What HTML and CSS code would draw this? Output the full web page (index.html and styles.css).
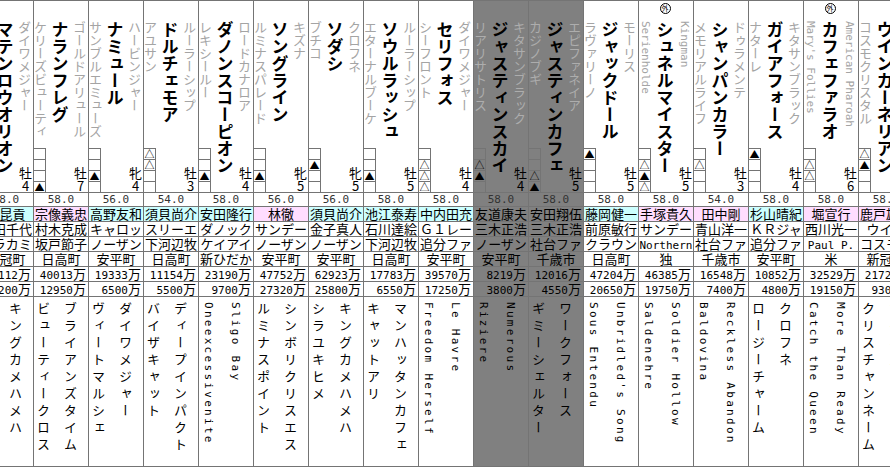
FILE: index.html
```html
<!DOCTYPE html>
<html lang="ja">
<head>
<meta charset="utf-8">
<title>出馬表</title>
<link rel="stylesheet" href="styles.css">
</head>
<body>
<div class="sheet">

<div class="col">
  <div class="top">
    <span class="v dam">パルテノン</span>
    <span class="v name">マテンロウオリオン</span>
    <span class="v sire">ダイワメジャー</span>
    <div class="marks"><i></i><i></i><i></i><i></i></div>
    <div class="sex">牡<br>4</div>
  </div>
  <div class="cell w">58.0</div>
  <div class="cell cy">　昆貢</div>
  <div class="cell">寺田千代</div>
  <div class="cell">ムラカミ</div>
  <div class="cell">新冠町</div>
  <div class="cell num"><span class="d">27112</span>万</div>
  <div class="cell num"><span class="d">9200</span>万</div>
  <div class="low"><span>パルテノン</span><span>キングカメハメハ</span></div>
</div>

<div class="col">
  <div class="top">
    <span class="v dam">ケリーズビューティ</span>
    <span class="v name">ナランフレグ</span>
    <span class="v sire">ゴールドアリュール</span>
    <div class="marks"><i></i><i></i><i></i><i>▲</i></div>
    <div class="sex">牡<br>7</div>
  </div>
  <div class="cell w">58.0</div>
  <div class="cell pk">宗像義忠</div>
  <div class="cell">村木克成</div>
  <div class="cell">坂戸節子</div>
  <div class="cell">日高町</div>
  <div class="cell num"><span class="d">40013</span>万</div>
  <div class="cell num"><span class="d">12950</span>万</div>
  <div class="low"><span>ビューティークロス</span><span>ブライアンズタイム</span></div>
</div>

<div class="col">
  <div class="top">
    <span class="v dam">サンブルエミューズ</span>
    <span class="v name">ナミュール</span>
    <span class="v sire">ハービンジャー</span>
    <div class="marks"><i></i><i></i><i>▲</i><i></i></div>
    <div class="sex">牝<br>4</div>
  </div>
  <div class="cell w">56.0</div>
  <div class="cell cy">高野友和</div>
  <div class="cell">キャロッ</div>
  <div class="cell">ノーザン</div>
  <div class="cell">安平町</div>
  <div class="cell num"><span class="d">19333</span>万</div>
  <div class="cell num"><span class="d">6500</span>万</div>
  <div class="low"><span>ヴィートマルシェ</span><span>ダイワメジャー</span></div>
</div>

<div class="col">
  <div class="top">
    <span class="v dam">アユサン</span>
    <span class="v name">ドルチェモア</span>
    <span class="v sire">ルーラーシップ</span>
    <div class="marks"><i>△</i><i>△</i><i></i><i></i></div>
    <div class="sex">牡<br>3</div>
  </div>
  <div class="cell w">54.0</div>
  <div class="cell cy">須貝尚介</div>
  <div class="cell">スリーエ</div>
  <div class="cell">下河辺牧</div>
  <div class="cell">日高町</div>
  <div class="cell num"><span class="d">11154</span>万</div>
  <div class="cell num"><span class="d">5500</span>万</div>
  <div class="low"><span>バイザキャット</span><span>ディープインパクト</span></div>
</div>

<div class="col">
  <div class="top">
    <span class="v dam">レキシールー</span>
    <span class="v name">ダノンスコーピオン</span>
    <span class="v sire">ロードカナロア</span>
    <div class="marks"><i></i><i></i><i>▲</i><i></i></div>
    <div class="sex">牡<br>4</div>
  </div>
  <div class="cell w">58.0</div>
  <div class="cell cy">安田隆行</div>
  <div class="cell">ダノック</div>
  <div class="cell">ケイアイ</div>
  <div class="cell">新ひだか</div>
  <div class="cell num"><span class="d">23190</span>万</div>
  <div class="cell num"><span class="d">9700</span>万</div>
  <div class="low"><span class="lat">Oneexcessivenite</span><span class="lat">Sligo Bay</span></div>
</div>

<div class="col">
  <div class="top">
    <span class="v dam">ルミナスパレード</span>
    <span class="v name">ソングライン</span>
    <span class="v sire">キズナ</span>
    <div class="marks"><i></i><i></i><i>▲</i><i></i></div>
    <div class="sex">牝<br>5</div>
  </div>
  <div class="cell w">56.0</div>
  <div class="cell pk">林徹</div>
  <div class="cell">サンデー</div>
  <div class="cell">ノーザン</div>
  <div class="cell">安平町</div>
  <div class="cell num"><span class="d">47752</span>万</div>
  <div class="cell num"><span class="d">27320</span>万</div>
  <div class="low"><span>ルミナスポイント</span><span>シンボリクリスエス</span></div>
</div>

<div class="col">
  <div class="top">
    <span class="v dam">ブチコ</span>
    <span class="v name">ソダシ</span>
    <span class="v sire">クロフネ</span>
    <div class="marks"><i></i><i>▲</i><i></i><i></i></div>
    <div class="sex">牝<br>5</div>
  </div>
  <div class="cell w">56.0</div>
  <div class="cell cy">須貝尚介</div>
  <div class="cell">金子真人</div>
  <div class="cell">ノーザン</div>
  <div class="cell">安平町</div>
  <div class="cell num"><span class="d">62923</span>万</div>
  <div class="cell num"><span class="d">25800</span>万</div>
  <div class="low"><span>シラユキヒメ</span><span>キングカメハメハ</span></div>
</div>

<div class="col">
  <div class="top">
    <span class="v dam">エターナルブーケ</span>
    <span class="v name">ソウルラッシュ</span>
    <span class="v sire">ルーラーシップ</span>
    <div class="marks"><i></i><i></i><i>▲</i><i></i></div>
    <div class="sex">牡<br>5</div>
  </div>
  <div class="cell w">58.0</div>
  <div class="cell cy">池江泰寿</div>
  <div class="cell">石川達絵</div>
  <div class="cell">下河辺牧</div>
  <div class="cell">日高町</div>
  <div class="cell num"><span class="d">17783</span>万</div>
  <div class="cell num"><span class="d">6550</span>万</div>
  <div class="low"><span>キャットアリ</span><span>マンハッタンカフェ</span></div>
</div>

<div class="col">
  <div class="top">
    <span class="v dam">シーフロント</span>
    <span class="v name">セリフォス</span>
    <span class="v sire">ダイワメジャー</span>
    <div class="marks"><i></i><i>△</i><i>△</i><i>△</i></div>
    <div class="sex">牡<br>4</div>
  </div>
  <div class="cell w">58.0</div>
  <div class="cell cy">中内田充</div>
  <div class="cell">Ｇ１レー</div>
  <div class="cell">追分ファ</div>
  <div class="cell">安平町</div>
  <div class="cell num"><span class="d">39570</span>万</div>
  <div class="cell num"><span class="d">17250</span>万</div>
  <div class="low"><span class="lat">Freedom Herself</span><span class="lat">Le Havre</span></div>
</div>

<div class="col g">
  <div class="top">
    <span class="v dam">リアリサトリス</span>
    <span class="v name">ジャスティンスカイ</span>
    <span class="v sire">キタサンブラック</span>
    <div class="marks"><i></i><i>△</i><i>▲</i><i></i></div>
    <div class="sex">牡<br>4</div>
  </div>
  <div class="cell w">58.0</div>
  <div class="cell">友道康夫</div>
  <div class="cell">三木正浩</div>
  <div class="cell">ノーザン</div>
  <div class="cell">安平町</div>
  <div class="cell num"><span class="d">8219</span>万</div>
  <div class="cell num"><span class="d">3800</span>万</div>
  <div class="low"><span class="lat">Riziere</span><span class="lat">Numerous</span></div>
</div>

<div class="col g">
  <div class="top">
    <span class="v dam">カジノブギ</span>
    <span class="v name">ジャスティンカフェ</span>
    <span class="v sire">エピファネイア</span>
    <div class="marks"><i></i><i></i><i>△</i><i>▲</i></div>
    <div class="sex">牡<br>5</div>
  </div>
  <div class="cell w">58.0</div>
  <div class="cell">安田翔伍</div>
  <div class="cell">三木正浩</div>
  <div class="cell">社台ファ</div>
  <div class="cell">千歳市</div>
  <div class="cell num"><span class="d">12016</span>万</div>
  <div class="cell num"><span class="d">4550</span>万</div>
  <div class="low"><span>ギミーシェルター</span><span>ワークフォース</span></div>
</div>

<div class="col">
  <div class="top">
    <span class="v dam">ラヴァリーノ</span>
    <span class="v name">ジャックドール</span>
    <span class="v sire">モーリス</span>
    <div class="marks"><i>▲</i><i></i><i></i><i></i></div>
    <div class="sex">牡<br>5</div>
  </div>
  <div class="cell w">58.0</div>
  <div class="cell cy">藤岡健一</div>
  <div class="cell">前原敏行</div>
  <div class="cell">クラウン</div>
  <div class="cell">日高町</div>
  <div class="cell num"><span class="d">47204</span>万</div>
  <div class="cell num"><span class="d">20650</span>万</div>
  <div class="low"><span class="lat">Sous Entendu</span><span class="lat">Unbridled's Song</span></div>
</div>

<div class="col">
  <div class="top">
    <span class="gai">外</span>
    <span class="v dam lat">Serienholde</span>
    <span class="v name">シュネルマイスター</span>
    <span class="v sire lat">Kingman</span>
    <div class="marks"><i></i><i>△</i><i>▲</i><i>△</i></div>
    <div class="sex">牡<br>5</div>
  </div>
  <div class="cell w">58.0</div>
  <div class="cell pk">手塚貴久</div>
  <div class="cell">サンデー</div>
  <div class="cell"><span class="d">Northern</span></div>
  <div class="cell">独</div>
  <div class="cell num"><span class="d">46385</span>万</div>
  <div class="cell num"><span class="d">19750</span>万</div>
  <div class="low"><span class="lat">Saldenehre</span><span class="lat">Soldier Hollow</span></div>
</div>

<div class="col">
  <div class="top">
    <span class="v dam">メモリアルライフ</span>
    <span class="v name">シャンパンカラー</span>
    <span class="v sire">ドゥラメンテ</span>
    <div class="marks"><i></i><i>△</i><i></i><i></i></div>
    <div class="sex">牡<br>3</div>
  </div>
  <div class="cell w">54.0</div>
  <div class="cell pk">田中剛</div>
  <div class="cell">青山洋一</div>
  <div class="cell">社台ファ</div>
  <div class="cell">千歳市</div>
  <div class="cell num"><span class="d">16548</span>万</div>
  <div class="cell num"><span class="d">7400</span>万</div>
  <div class="low"><span class="lat">Baldovina</span><span class="lat">Reckless Abandon</span></div>
</div>

<div class="col">
  <div class="top">
    <span class="v dam">ナターレ</span>
    <span class="v name">ガイアフォース</span>
    <span class="v sire">キタサンブラック</span>
    <div class="marks"><i>▲</i><i></i><i></i><i></i></div>
    <div class="sex">牡<br>4</div>
  </div>
  <div class="cell w">58.0</div>
  <div class="cell cy">杉山晴紀</div>
  <div class="cell">ＫＲジャ</div>
  <div class="cell">追分ファ</div>
  <div class="cell">安平町</div>
  <div class="cell num"><span class="d">10852</span>万</div>
  <div class="cell num"><span class="d">4800</span>万</div>
  <div class="low"><span>ロージーチャーム</span><span>クロフネ</span></div>
</div>

<div class="col">
  <div class="top">
    <span class="gai">外</span>
    <span class="v dam lat">Mary's Follies</span>
    <span class="v name">カフェファラオ</span>
    <span class="v sire lat">American Pharoah</span>
    <div class="marks"><i></i><i>△</i><i>△</i><i></i></div>
    <div class="sex">牡<br>6</div>
  </div>
  <div class="cell w">58.0</div>
  <div class="cell pk">堀宣行</div>
  <div class="cell">西川光一</div>
  <div class="cell"><span class="d">Paul P.</span></div>
  <div class="cell">米</div>
  <div class="cell num"><span class="d">32529</span>万</div>
  <div class="cell num"><span class="d">19150</span>万</div>
  <div class="low"><span class="lat">Catch the Queen</span><span class="lat">More Than Ready</span></div>
</div>

<div class="col">
  <div class="top">
    <span class="v dam">コスモクリスタル</span>
    <span class="v name">ウインカーネリアン</span>
    <span class="v sire">スクリーンヒーロー</span>
    <div class="marks"><i>△</i><i>▲</i><i></i><i></i></div>
    <div class="sex">牡<br>6</div>
  </div>
  <div class="cell w">58.0</div>
  <div class="cell pk">鹿戸雄一</div>
  <div class="cell">ウイン</div>
  <div class="cell">コスモヴ</div>
  <div class="cell">新冠町</div>
  <div class="cell num"><span class="d">21727</span>万</div>
  <div class="cell num"><span class="d">9300</span>万</div>
  <div class="low"><span>クリスチャンネーム</span><span>マイネルラヴ</span></div>
</div>

</div>
</body>
</html>
```

FILE: styles.css
```css
html, body {
  margin: 0;
  padding: 0;
  background: #fff;
}

body {
  width: 890px;
  height: 469px;
  overflow: hidden;
  font-family: "Noto Sans CJK JP", "Noto Sans", sans-serif;
  color: #000;
}

.sheet {
  display: flex;
  width: max-content;
  margin-left: -22px;
  border-top: 1px solid #747474;
}

.col {
  width: 54px;
  border-left: 1px solid #747474;
  display: flex;
  flex-direction: column;
}

.col.g {
  background: #808080;
}

/* top block: names */
.top {
  height: 191px;
  display: grid;
  grid-template-columns: 13px 26px 13px 2px;
  grid-template-rows: 20px 1fr 44px;
  border-bottom: 1px solid #747474;
  overflow: hidden;
}

.v {
  writing-mode: vertical-rl;
  white-space: nowrap;
  overflow: hidden;
  justify-self: center;
  align-self: start;
}

.gai {
  grid-area: 1 / 2;
  justify-self: center;
  align-self: start;
  margin-top: 2px;
  width: 9px;
  height: 9px;
  border: 1px solid #000;
  border-radius: 50%;
  font-size: 7px;
  line-height: 9px;
  text-align: center;
}

.dam,
.sire {
  font-size: 13px;
  line-height: 13px;
  width: 13px;
  color: #a4a4a4;
}

.dam {
  grid-area: 2 / 1;
}

.sire {
  grid-area: 2 / 3;
}

.col.g .dam,
.col.g .sire {
  color: #adadad;
}

.name {
  grid-area: 2 / 2 / 4 / 3;
  font-size: 17px;
  line-height: 17px;
  width: 17px;
  font-weight: 700;
}

.lat {
  font-family: "DejaVu Sans Mono", "Liberation Mono", monospace;
  font-size: 11px;
}

.marks {
  grid-area: 3 / 1;
  width: 11px;
  border-right: 1px solid #747474;
  display: flex;
  flex-direction: column;
}

.marks i {
  height: 10px;
  border-top: 1px solid #747474;
  font-style: normal;
  font-size: 10px;
  line-height: 10px;
  text-align: center;
  overflow: hidden;
}

.sex {
  grid-area: 3 / 3 / 4 / 5;
  align-self: end;
  text-align: center;
  font-size: 13px;
  line-height: 13px;
}

/* data rows */
.cell {
  height: 14px;
  line-height: 14px;
  font-size: 13px;
  text-align: center;
  white-space: nowrap;
  overflow: hidden;
  border-bottom: 1px solid #747474;
}

.cell.w {
  height: 13px;
  line-height: 13px;
  font-family: "DejaVu Sans Mono", "Liberation Mono", monospace;
  font-size: 11px;
  color: #333;
}

.cell.pk {
  background: #ffddff;
}

.cell.cy {
  background: #ccffff;
}

.cell.num {
  text-align: right;
  padding-right: 2px;
}

.d {
  font-family: "DejaVu Sans Mono", "Liberation Mono", monospace;
  font-size: 11px;
}

/* bottom block: dam's family */
.low {
  height: 164px;
  padding: 5px 0 0 3px;
  display: flex;
  gap: 14px;
  border-bottom: 1px solid #747474;
  overflow: hidden;
}

.low span {
  writing-mode: vertical-rl;
  white-space: nowrap;
  width: 13px;
  font-size: 13px;
  line-height: 13px;
  letter-spacing: 4px;
}

.low span.lat {
  font-size: 11px;
  letter-spacing: 2.3px;
}
```
